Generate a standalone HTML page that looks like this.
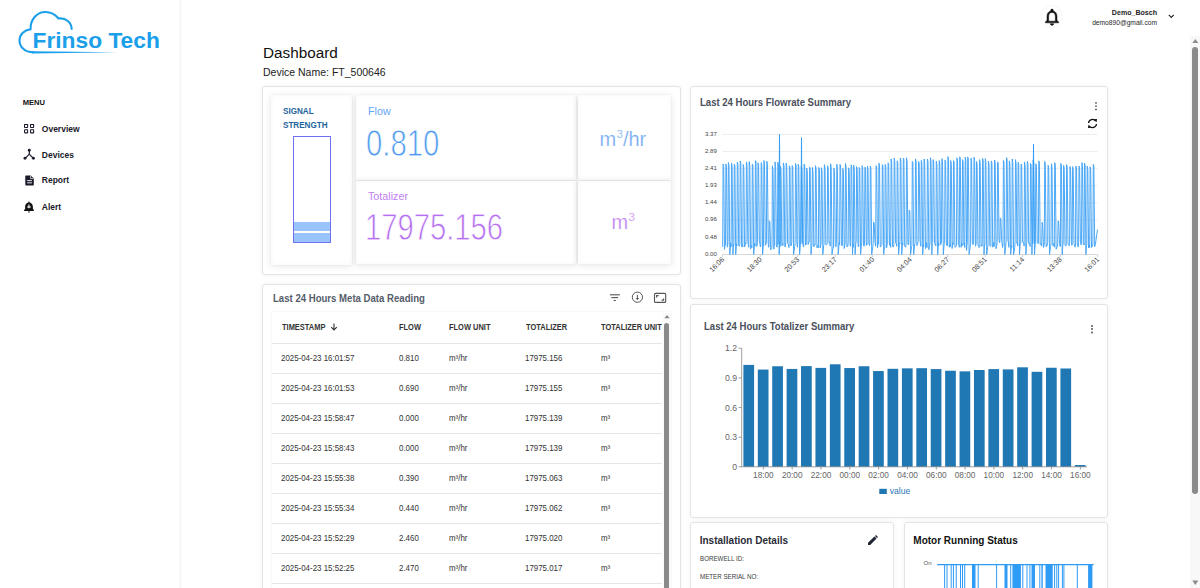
<!DOCTYPE html>
<html><head><meta charset="utf-8">
<style>
html,body{margin:0;padding:0;}
body{width:1200px;height:588px;overflow:hidden;background:#fff;position:relative;font-family:"Liberation Sans",sans-serif;color:#222;}
.abs{position:absolute;}
.t{position:absolute;white-space:nowrap;line-height:1;}
.card{position:absolute;background:#fff;border:1px solid #e2e4e8;border-radius:3px;box-sizing:border-box;box-shadow:0 0 5px rgba(0,0,0,0.05);}
.pap{position:absolute;background:#fff;box-shadow:0 1px 7px rgba(0,0,0,0.11),0 0 1px rgba(0,0,0,0.07),inset 0 0 5px rgba(0,0,0,0.03);}
.row{position:absolute;left:272px;width:390px;height:1px;background:#e6e6e6;}
.td{position:absolute;white-space:nowrap;line-height:1;font-size:8.6px;color:#333;transform:scaleX(0.92);transform-origin:0 0;}
.th{position:absolute;white-space:nowrap;line-height:1;font-size:8.3px;font-weight:700;color:#333;transform:scaleX(0.9);transform-origin:0 0;}
.menu{position:absolute;white-space:nowrap;line-height:1;font-size:8.5px;font-weight:700;color:#1a1a2a;}
</style></head>
<body>
<!-- sidebar -->
<div class="abs" style="left:179px;top:0;width:3px;height:588px;background:#f9f9fa"></div>
<svg class="abs" style="left:0;top:0" width="180" height="70" viewBox="0 0 180 70">
  <path d="M33,52.3 C25,52.3 19.5,47 19.5,40.5 C19.5,34.5 24,30 30.5,29.2 C30.5,19 37,12 45.5,12 C51,12 55.5,14.8 58.5,18.5 C66,17.5 71.5,22.5 71.7,29" fill="none" stroke="#1b9fea" stroke-width="2.1" stroke-linecap="round"/>
  <path d="M32,51.2 L118,52.2 L32,53.4 Z" fill="#1b9fea"/>
  <text x="32.5" y="48.3" font-family="Liberation Sans" font-weight="700" font-size="21.9" fill="#1b9fea" transform="translate(32.5,0) scale(1.04,1) translate(-32.5,0)">Frinso Tech</text>
</svg>
<div class="t" style="left:22.7px;top:99px;font-size:7.6px;font-weight:700;color:#111">MENU</div>
<!-- icons -->
<svg class="abs" style="left:24px;top:124px" width="11" height="11" viewBox="0 0 11 11"><g fill="none" stroke="#1a1a2a" stroke-width="1.05"><rect x="0.55" y="0.35" width="3.1" height="3.1" rx="0.4"/><rect x="6.55" y="0.35" width="3.1" height="3.1" rx="0.4"/><rect x="0.55" y="5.75" width="3.1" height="3.1" rx="0.4"/><rect x="6.55" y="5.75" width="3.1" height="3.1" rx="0.4"/></g></svg>
<div class="menu" style="left:41.8px;top:125px">Overview</div>
<svg class="abs" style="left:23px;top:148px" width="12" height="12" viewBox="0 0 12 12"><g stroke="#1a1a2a" stroke-width="1.2" fill="#1a1a2a"><line x1="6.3" y1="2.4" x2="6.3" y2="6.2"/><line x1="6.3" y1="6.2" x2="2.2" y2="10.3"/><line x1="6.3" y1="6.2" x2="10.3" y2="10.3"/></g><g fill="#1a1a2a"><circle cx="6.3" cy="2.3" r="1.45"/><circle cx="2" cy="10.3" r="1.45"/><circle cx="10.4" cy="10.3" r="1.45"/></g></svg>
<div class="menu" style="left:41.8px;top:150.6px">Devices</div>
<svg class="abs" style="left:24.5px;top:175px" width="10" height="11" viewBox="0 0 10 11"><path d="M1.3,0.4 H5.7 L8.8,3.5 V9.6 C8.8,10.2 8.4,10.6 7.8,10.6 H1.3 C0.7,10.6 0.3,10.2 0.3,9.6 V1.4 C0.3,0.8 0.7,0.4 1.3,0.4 Z" fill="#1a1a2a"/><path d="M5.6,0.9 V3.6 H8.3" fill="none" stroke="#fff" stroke-width="0.7"/><rect x="2.2" y="5.2" width="4.7" height="0.9" fill="#fff"/><rect x="2.2" y="7.4" width="4.7" height="0.9" fill="#fff"/></svg>
<div class="menu" style="left:41.8px;top:176.4px">Report</div>
<svg class="abs" style="left:24px;top:200.5px" width="11" height="12" viewBox="0 0 11 12"><path d="M4.4,0.6 H5.5 V1.6 C7.6,2 8.9,3.8 8.9,6 V8.4 L9.9,8.6 V10.1 H0.1 V8.6 L1.1,8.4 V6 C1.1,3.8 2.4,2 4.4,1.6 Z" fill="#111"/><path d="M4,10.4 H6 C6,11.1 5.6,11.6 5,11.6 C4.4,11.6 4,11.1 4,10.4Z" fill="#111"/><path d="M4.95,3.6 V7.3 M3.05,5.95 H6.85" stroke="#fff" stroke-width="1.15"/></svg>
<div class="menu" style="left:41.8px;top:202.5px">Alert</div>

<!-- header -->
<div class="abs" style="left:1041px;top:5.5px;width:21px;height:21px;border-radius:50%;box-shadow:0 0 1.5px rgba(0,0,0,0.12)"></div>
<svg class="abs" style="left:1041.9px;top:6.7px" width="20" height="20" viewBox="0 0 24 24"><path fill="#111" stroke="#111" stroke-width="0.6" d="M12 22c1.1 0 2-.9 2-2h-4c0 1.1.89 2 2 2zm6-6v-5c0-3.07-1.64-5.64-4.5-6.32V4c0-.83-.67-1.5-1.5-1.5s-1.5.67-1.5 1.5v.68C7.630 5.36 6 7.92 6 11v5l-2 2v1h16v-1l-2-2zm-2 1H8v-6c0-2.48 1.510-4.5 4-4.5s4 2.020 4 4.5v6z"/></svg>
<div class="t" style="left:1107px;top:8.6px;font-size:7.6px;font-weight:700;color:#222;text-align:right;width:50px;transform:scaleX(0.93);transform-origin:100% 0">Demo_Bosch</div>
<div class="t" style="left:1091px;top:19.8px;font-size:6.67px;color:#262626;text-align:right;width:66px">demo890@gmail.com</div>
<svg class="abs" style="left:1167.5px;top:14px" width="7" height="5" viewBox="0 0 7 5"><path d="M0.8,0.8 L3.3,3.4 L5.8,0.8" fill="none" stroke="#222" stroke-width="1.1"/></svg>

<!-- page scrollbar -->
<div class="abs" style="left:1190px;top:36px;width:10px;height:552px;background:#f8f8f8"></div>
<div class="abs" style="left:1192.3px;top:47.2px;width:6px;height:446.5px;background:#8a8a8a;border-radius:3px"></div>
<svg class="abs" style="left:1190px;top:36px" width="10" height="552" viewBox="0 0 10 552"><path d="M2.3,7 L5.3,3 L8.3,7 Z" fill="#8a8a8a"/><path d="M2.3,544.6 L5.3,549 L8.3,544.6 Z" fill="#8a8a8a"/></svg>

<!-- titles -->
<div class="t" style="left:263px;top:45.3px;font-size:15.3px;color:#111">Dashboard</div>
<div class="t" style="left:263px;top:67.3px;font-size:11.3px;color:#222;transform:scaleX(0.93);transform-origin:0 0">Device Name: FT_500646</div>

<!-- card 1 stats -->
<div class="card" style="left:262px;top:86px;width:419px;height:189px"></div>
<div class="pap" style="left:271px;top:95px;width:81px;height:170px"></div>
<div class="t" style="left:283.3px;top:104.3px;font-size:9px;font-weight:700;color:#1e64a0;line-height:14px;transform:scaleX(0.9);transform-origin:0 0">SIGNAL<br>STRENGTH</div>
<div class="abs" style="left:293px;top:135.5px;width:38px;height:107px;box-sizing:border-box;border:1px solid #7070f5"></div>
<div class="abs" style="left:294px;top:222px;width:36px;height:9px;background:#99c3fb"></div>
<div class="abs" style="left:294px;top:233px;width:36px;height:9px;background:#99c3fb"></div>

<div class="pap" style="left:356px;top:95px;width:220px;height:85px"></div>
<div class="pap" style="left:578px;top:95px;width:93px;height:85px"></div>
<div class="pap" style="left:356px;top:181px;width:220px;height:83px"></div>
<div class="pap" style="left:578px;top:181px;width:93px;height:83px"></div>
<div class="t" style="left:368px;top:106.2px;font-size:11.3px;color:#62a6f5;transform:scaleX(0.95);transform-origin:0 0">Flow</div>
<div class="t" style="left:366.2px;top:125.4px;font-size:37.5px;color:#4f9af0;transform:scaleX(0.781);transform-origin:0 0;-webkit-text-stroke:0.85px #fff">0.810</div>
<div class="t" style="left:368px;top:190.7px;font-size:11.3px;color:#c07ef2;transform:scaleX(0.95);transform-origin:0 0">Totalizer</div>
<div class="t" style="left:364.8px;top:209.2px;font-size:37.5px;color:#b56ff0;transform:scaleX(0.779);transform-origin:0 0;-webkit-text-stroke:0.85px #fff">17975.156</div>
<div class="t" style="left:599.5px;top:129px;font-size:20px;color:#74abf0;-webkit-text-stroke:0.2px #fff">m<span style="font-size:11.5px;position:relative;top:-8.3px;margin-left:0.3px">3</span>/hr</div>
<div class="t" style="left:611.5px;top:212.3px;font-size:20px;color:#c184f0;-webkit-text-stroke:0.2px #fff">m<span style="font-size:11.5px;position:relative;top:-8.3px;margin-left:0.3px">3</span></div>

<!-- meta card -->
<div class="card" style="left:262px;top:284px;width:419px;height:320px"></div>
<div class="t" style="left:272.5px;top:293.8px;font-size:10.1px;font-weight:700;color:#555c6a;transform:scaleX(0.95);transform-origin:0 0">Last 24 Hours Meta Data Reading</div>
<svg class="abs" style="left:609px;top:291px" width="60" height="13" viewBox="0 0 60 13">
 <g stroke="#555" fill="none"><line x1="0.9" y1="3.8" x2="10.9" y2="3.8" stroke-width="1.1"/><line x1="2.4" y1="6.6" x2="9" y2="6.6" stroke-width="1.1"/><line x1="4.7" y1="9.5" x2="6.8" y2="9.5" stroke-width="1.1"/>
 <circle cx="28.4" cy="6.2" r="5.1" stroke-width="1"/><path d="M28.4,3.8 V8.2" stroke-width="1"/></g><path d="M26.6,7 L28.4,8.9 L30.2,7 Z" fill="#555"/>
 <g stroke="#555" fill="none"><rect x="45.5" y="2.4" width="11.2" height="9" rx="1" stroke-width="1.1"/><path d="M47.6,6.4 V4.6 H49.6" stroke-width="1.2"/><path d="M54.6,7.4 V9.2 H52.6" stroke-width="1.2"/></g></svg>
<div class="pap" style="left:272px;top:312px;width:399px;height:300px;box-shadow:0 0 2px rgba(0,0,0,0.08)"></div>
<div class="th" style="left:281.5px;top:323.1px">TIMESTAMP</div>
<svg class="abs" style="left:330px;top:323px" width="8" height="8" viewBox="0 0 8 8"><path d="M4,0.5 V7 M1.2,4.2 L4,7 L6.8,4.2" fill="none" stroke="#333" stroke-width="1.1"/></svg>
<div class="th" style="left:399.2px;top:323.1px">FLOW</div>
<div class="th" style="left:449.2px;top:323.1px">FLOW UNIT</div>
<div class="th" style="left:526px;top:323.1px">TOTALIZER</div>
<div class="th" style="left:601.3px;top:323.1px">TOTALIZER UNIT</div>
<div class="row" style="top:343.3px"></div><div class="td" style="left:281px;top:354.3px">2025-04-23 16:01:57</div><div class="td" style="left:399px;top:354.3px">0.810</div><div class="td" style="left:449px;top:354.3px">m³/hr</div><div class="td" style="left:525px;top:354.3px">17975.156</div><div class="td" style="left:601px;top:354.3px">m³</div><div class="row" style="top:373.3px"></div><div class="td" style="left:281px;top:384.3px">2025-04-23 16:01:53</div><div class="td" style="left:399px;top:384.3px">0.690</div><div class="td" style="left:449px;top:384.3px">m³/hr</div><div class="td" style="left:525px;top:384.3px">17975.155</div><div class="td" style="left:601px;top:384.3px">m³</div><div class="row" style="top:403.3px"></div><div class="td" style="left:281px;top:414.3px">2025-04-23 15:58:47</div><div class="td" style="left:399px;top:414.3px">0.000</div><div class="td" style="left:449px;top:414.3px">m³/hr</div><div class="td" style="left:525px;top:414.3px">17975.139</div><div class="td" style="left:601px;top:414.3px">m³</div><div class="row" style="top:433.3px"></div><div class="td" style="left:281px;top:444.3px">2025-04-23 15:58:43</div><div class="td" style="left:399px;top:444.3px">0.000</div><div class="td" style="left:449px;top:444.3px">m³/hr</div><div class="td" style="left:525px;top:444.3px">17975.139</div><div class="td" style="left:601px;top:444.3px">m³</div><div class="row" style="top:463.3px"></div><div class="td" style="left:281px;top:474.3px">2025-04-23 15:55:38</div><div class="td" style="left:399px;top:474.3px">0.390</div><div class="td" style="left:449px;top:474.3px">m³/hr</div><div class="td" style="left:525px;top:474.3px">17975.063</div><div class="td" style="left:601px;top:474.3px">m³</div><div class="row" style="top:493.3px"></div><div class="td" style="left:281px;top:504.3px">2025-04-23 15:55:34</div><div class="td" style="left:399px;top:504.3px">0.440</div><div class="td" style="left:449px;top:504.3px">m³/hr</div><div class="td" style="left:525px;top:504.3px">17975.062</div><div class="td" style="left:601px;top:504.3px">m³</div><div class="row" style="top:523.3px"></div><div class="td" style="left:281px;top:534.3px">2025-04-23 15:52:29</div><div class="td" style="left:399px;top:534.3px">2.460</div><div class="td" style="left:449px;top:534.3px">m³/hr</div><div class="td" style="left:525px;top:534.3px">17975.020</div><div class="td" style="left:601px;top:534.3px">m³</div><div class="row" style="top:553.3px"></div><div class="td" style="left:281px;top:564.3px">2025-04-23 15:52:25</div><div class="td" style="left:399px;top:564.3px">2.470</div><div class="td" style="left:449px;top:564.3px">m³/hr</div><div class="td" style="left:525px;top:564.3px">17975.017</div><div class="td" style="left:601px;top:564.3px">m³</div><div class="row" style="top:583.3px"></div>
<div class="abs" style="left:663px;top:313px;width:8px;height:275px;background:#fafafa"></div>
<div class="abs" style="left:664.3px;top:323.3px;width:5px;height:265px;background:#8a8a8a;border-radius:2.5px 2.5px 0 0"></div>
<svg class="abs" style="left:663px;top:313px" width="8" height="7" viewBox="0 0 8 7"><path d="M1.3,5.3 L4,2 L6.7,5.3Z" fill="#8a8a8a"/></svg>

<!-- flowrate chart card -->
<div class="card" style="left:690px;top:86px;width:418px;height:213px"></div>
<div class="t" style="left:700px;top:98.4px;font-size:10.1px;font-weight:700;color:#4a505c;transform:scaleX(0.945);transform-origin:0 0">Last 24 Hours Flowrate Summary</div>
<svg class="abs" style="left:1094px;top:101px" width="4" height="10" viewBox="0 0 4 10"><g fill="#555"><circle cx="2" cy="1.9" r="0.9"/><circle cx="2" cy="5.1" r="0.9"/><circle cx="2" cy="8.4" r="0.9"/></g></svg>
<svg class="abs" style="left:1087px;top:118px" width="11" height="11" viewBox="0 0 11 11"><g fill="none" stroke="#111" stroke-width="1.3"><path d="M1.5,5 A4,4 0 0 1 8.8,3.2"/><path d="M9.5,6 A4,4 0 0 1 2.2,7.8"/></g><path d="M7,1.2 L10,1 L9.6,4.3Z" fill="#111"/><path d="M4,9.8 L1,10 L1.4,6.7Z" fill="#111"/></svg>
<svg class="abs" style="left:0;top:0" width="1200" height="588" viewBox="0 0 1200 588">
<line x1="722.5" y1="254.5" x2="1097.5" y2="254.5" stroke="#ececec" stroke-width="1"/><text x="716.8" y="255.7" text-anchor="end" font-size="6.1" fill="#444">0.00</text><line x1="722.5" y1="237.3" x2="1097.5" y2="237.3" stroke="#ececec" stroke-width="1"/><text x="716.8" y="238.5" text-anchor="end" font-size="6.1" fill="#444">0.48</text><line x1="722.5" y1="220.2" x2="1097.5" y2="220.2" stroke="#ececec" stroke-width="1"/><text x="716.8" y="221.4" text-anchor="end" font-size="6.1" fill="#444">0.96</text><line x1="722.5" y1="203.0" x2="1097.5" y2="203.0" stroke="#ececec" stroke-width="1"/><text x="716.8" y="204.2" text-anchor="end" font-size="6.1" fill="#444">1.44</text><line x1="722.5" y1="185.9" x2="1097.5" y2="185.9" stroke="#ececec" stroke-width="1"/><text x="716.8" y="187.1" text-anchor="end" font-size="6.1" fill="#444">1.93</text><line x1="722.5" y1="168.7" x2="1097.5" y2="168.7" stroke="#ececec" stroke-width="1"/><text x="716.8" y="169.9" text-anchor="end" font-size="6.1" fill="#444">2.41</text><line x1="722.5" y1="151.6" x2="1097.5" y2="151.6" stroke="#ececec" stroke-width="1"/><text x="716.8" y="152.8" text-anchor="end" font-size="6.1" fill="#444">2.89</text><line x1="722.5" y1="134.4" x2="1097.5" y2="134.4" stroke="#ececec" stroke-width="1"/><text x="716.8" y="135.6" text-anchor="end" font-size="6.1" fill="#444">3.37</text><line x1="722.7" y1="254.5" x2="722.7" y2="257" stroke="#ccc"/><text transform="translate(724.7,260) rotate(-45)" text-anchor="end" font-size="7.1" fill="#444">16:06</text><line x1="760.2" y1="254.5" x2="760.2" y2="257" stroke="#ccc"/><text transform="translate(762.2,260) rotate(-45)" text-anchor="end" font-size="7.1" fill="#444">18:30</text><line x1="797.7" y1="254.5" x2="797.7" y2="257" stroke="#ccc"/><text transform="translate(799.7,260) rotate(-45)" text-anchor="end" font-size="7.1" fill="#444">20:53</text><line x1="835.2" y1="254.5" x2="835.2" y2="257" stroke="#ccc"/><text transform="translate(837.2,260) rotate(-45)" text-anchor="end" font-size="7.1" fill="#444">23:17</text><line x1="872.7" y1="254.5" x2="872.7" y2="257" stroke="#ccc"/><text transform="translate(874.7,260) rotate(-45)" text-anchor="end" font-size="7.1" fill="#444">01:40</text><line x1="910.2" y1="254.5" x2="910.2" y2="257" stroke="#ccc"/><text transform="translate(912.2,260) rotate(-45)" text-anchor="end" font-size="7.1" fill="#444">04:04</text><line x1="947.7" y1="254.5" x2="947.7" y2="257" stroke="#ccc"/><text transform="translate(949.7,260) rotate(-45)" text-anchor="end" font-size="7.1" fill="#444">06:27</text><line x1="985.2" y1="254.5" x2="985.2" y2="257" stroke="#ccc"/><text transform="translate(987.2,260) rotate(-45)" text-anchor="end" font-size="7.1" fill="#444">08:51</text><line x1="1022.7" y1="254.5" x2="1022.7" y2="257" stroke="#ccc"/><text transform="translate(1024.7,260) rotate(-45)" text-anchor="end" font-size="7.1" fill="#444">11:14</text><line x1="1060.2" y1="254.5" x2="1060.2" y2="257" stroke="#ccc"/><text transform="translate(1062.2,260) rotate(-45)" text-anchor="end" font-size="7.1" fill="#444">13:38</text><line x1="1097.7" y1="254.5" x2="1097.7" y2="257" stroke="#ccc"/><text transform="translate(1099.7,260) rotate(-45)" text-anchor="end" font-size="7.1" fill="#444">16:01</text>
<line x1="722.5" y1="254.5" x2="1097.5" y2="254.5" stroke="#d8d8d8"/>
<path d="M722.5,246.7 L722.7,246.8 L723.1,164.0 L723.7,166.8 L724.5,249.3 L725.1,244.8 L725.5,244.9 L725.9,163.9 L726.5,166.4 L727.3,247.2 L727.6,246.5 L728.0,241.6 L728.4,162.5 L729.0,166.7 L729.8,254.5 L730.7,242.8 L731.1,246.8 L731.5,163.0 L732.1,166.6 L732.9,254.5 L733.5,244.4 L733.9,245.3 L734.3,164.2 L734.9,165.5 L735.7,254.5 L736.5,243.8 L736.9,245.7 L737.3,162.3 L737.9,164.4 L738.7,245.3 L739.4,246.3 L739.8,244.4 L740.2,161.0 L740.8,163.0 L741.6,246.7 L742.4,245.3 L742.8,246.8 L743.2,164.5 L743.8,167.7 L744.6,247.0 L745.6,242.7 L746.0,243.3 L746.4,161.9 L747.0,164.4 L747.8,241.7 L748.4,245.0 L748.8,247.3 L749.2,161.6 L749.8,165.9 L750.6,248.9 L751.5,245.5 L751.9,247.6 L752.3,164.1 L752.9,165.5 L753.7,254.5 L754.6,243.3 L755.0,246.1 L755.4,160.6 L756.0,161.9 L756.8,246.4 L757.2,242.7 L757.6,242.2 L758.0,162.9 L758.6,165.1 L759.4,240.6 L760.4,246.9 L760.8,246.2 L761.2,162.7 L761.8,165.6 L762.6,254.5 L763.1,247.7 L763.5,245.4 L763.9,160.5 L764.5,163.8 L765.3,245.3 L766.0,243.9 L766.4,242.0 L766.8,161.2 L767.4,164.8 L768.2,243.0 L768.5,247.1 L768.9,247.3 L769.3,220.8 L769.9,222.4 L770.7,249.9 L771.6,247.7 L772.0,247.1 L772.4,165.8 L773.0,169.7 L773.8,249.2 L774.2,246.3 L774.6,245.4 L775.0,161.9 L775.6,166.2 L776.4,246.0 L777.0,247.2 L777.4,245.5 L777.8,162.2 L778.4,163.8 L779.2,254.5 L779.6,242.3 L780.0,246.8 L780.4,166.4 L781.0,169.2 L781.8,245.6 L782.6,243.8 L783.0,245.4 L783.4,162.9 L784.0,165.7 L784.8,246.7 L785.4,246.5 L785.8,241.4 L786.2,163.0 L786.8,166.7 L787.6,243.2 L788.6,244.8 L789.0,247.5 L789.4,165.8 L790.0,167.7 L790.8,246.0 L791.4,245.2 L791.8,241.4 L792.2,165.6 L792.8,167.4 L793.6,254.5 L794.7,246.6 L795.1,243.7 L795.5,163.5 L796.1,166.1 L796.9,242.9 L797.4,247.2 L797.8,241.9 L798.2,164.2 L798.8,166.8 L799.6,254.5 L800.5,243.2 L800.9,242.6 L801.3,166.0 L801.9,168.3 L802.7,242.1 L803.3,246.8 L803.7,246.8 L804.1,164.0 L804.7,165.5 L805.5,245.1 L805.9,244.0 L806.3,244.2 L806.7,168.0 L807.3,172.2 L808.1,244.6 L808.8,242.4 L809.2,242.1 L809.6,167.1 L810.2,168.9 L811.0,254.5 L811.6,246.4 L812.0,246.1 L812.4,167.5 L813.0,171.5 L813.8,246.8 L814.7,244.4 L815.1,245.0 L815.5,165.7 L816.1,168.5 L816.9,247.8 L818.0,245.2 L818.4,247.7 L818.8,167.4 L819.4,170.0 L820.2,248.0 L820.6,245.9 L821.0,244.2 L821.4,167.8 L822.0,170.7 L822.8,254.5 L823.6,246.1 L824.0,244.5 L824.4,164.6 L825.0,168.6 L825.8,244.5 L826.8,244.8 L827.2,243.3 L827.6,165.8 L828.2,168.4 L829.0,242.9 L829.8,242.7 L830.2,246.1 L830.6,163.8 L831.2,167.6 L832.0,254.5 L833.1,247.0 L833.5,247.3 L833.9,168.2 L834.5,171.4 L835.3,246.0 L836.0,246.8 L836.4,243.5 L836.8,164.2 L837.4,168.4 L838.2,254.5 L839.2,242.3 L839.6,244.6 L840.0,164.4 L840.6,166.0 L841.4,245.1 L842.0,245.8 L842.4,245.7 L842.8,168.4 L843.4,171.2 L844.2,248.5 L844.7,245.8 L845.1,244.4 L845.5,163.5 L846.1,167.1 L846.9,246.8 L847.8,246.2 L848.2,242.7 L848.6,167.8 L849.2,170.2 L850.0,241.8 L850.3,246.3 L850.7,241.8 L851.1,164.9 L851.7,166.2 L852.5,254.5 L852.9,243.8 L853.3,247.3 L853.7,165.2 L854.3,168.8 L855.1,254.5 L855.8,242.8 L856.2,242.2 L856.6,166.6 L857.2,169.4 L858.0,243.8 L858.4,247.0 L858.8,246.2 L859.2,167.4 L859.8,168.7 L860.6,254.5 L861.3,245.9 L861.7,242.9 L862.1,165.7 L862.7,167.3 L863.5,245.6 L864.1,246.3 L864.5,243.0 L864.9,167.2 L865.5,169.8 L866.3,245.4 L866.6,243.1 L867.0,244.6 L867.4,166.1 L868.0,168.8 L868.8,242.9 L869.5,245.8 L869.9,243.2 L870.3,166.0 L870.9,168.2 L871.7,254.5 L872.8,247.0 L873.2,243.0 L873.6,221.9 L874.2,223.3 L875.0,241.8 L875.3,243.9 L875.7,246.2 L876.1,165.7 L876.7,167.3 L877.5,247.8 L878.1,242.2 L878.5,244.2 L878.9,163.1 L879.5,165.2 L880.3,247.1 L881.5,245.6 L881.9,244.5 L882.3,164.7 L882.9,165.8 L883.7,254.5 L884.4,247.2 L884.8,247.5 L885.2,164.4 L885.8,166.2 L886.6,247.9 L887.3,243.4 L887.7,243.1 L888.1,162.8 L888.7,164.9 L889.5,245.3 L890.3,243.6 L890.7,247.4 L891.1,158.9 L891.7,162.0 L892.5,246.5 L893.4,246.9 L893.8,244.5 L894.2,158.1 L894.8,161.8 L895.6,243.2 L896.4,243.8 L896.8,246.3 L897.2,160.8 L897.8,163.0 L898.6,254.5 L899.5,243.0 L899.9,243.7 L900.3,158.1 L900.9,160.7 L901.7,254.5 L902.5,243.2 L902.9,244.5 L903.3,158.2 L903.9,159.5 L904.7,246.2 L905.7,247.3 L906.1,243.1 L906.5,157.8 L907.1,162.0 L907.9,244.1 L908.4,245.0 L908.8,242.8 L909.2,210.0 L909.8,211.3 L910.6,254.5 L911.5,246.3 L911.9,245.8 L912.3,161.4 L912.9,162.7 L913.7,254.5 L914.7,243.9 L915.1,243.4 L915.5,158.9 L916.1,161.5 L916.9,245.7 L917.8,242.6 L918.2,241.5 L918.6,161.4 L919.2,163.9 L920.0,239.8 L920.5,245.2 L920.9,246.4 L921.3,160.4 L921.9,163.4 L922.7,254.5 L923.3,244.7 L923.7,246.9 L924.1,158.9 L924.7,162.9 L925.5,248.7 L926.6,242.6 L927.0,247.6 L927.4,159.0 L928.0,161.5 L928.8,249.8 L929.6,245.8 L930.0,242.3 L930.4,157.7 L931.0,161.5 L931.8,254.5 L932.3,242.4 L932.7,241.9 L933.1,159.6 L933.7,162.0 L934.5,242.1 L935.5,245.7 L935.9,246.0 L936.3,161.0 L936.9,164.7 L937.7,254.5 L938.4,242.4 L938.8,246.0 L939.2,160.5 L939.8,162.8 L940.6,244.8 L941.1,243.1 L941.5,241.9 L941.9,158.7 L942.5,162.1 L943.3,254.5 L944.2,243.6 L944.6,242.9 L945.0,160.1 L945.6,161.3 L946.4,245.2 L947.1,245.0 L947.5,245.8 L947.9,156.6 L948.5,158.5 L949.3,247.3 L949.9,244.6 L950.3,246.7 L950.7,160.5 L951.3,164.5 L952.1,248.5 L952.7,242.6 L953.1,244.8 L953.5,160.6 L954.1,162.0 L954.9,247.3 L956.1,246.4 L956.5,244.1 L956.9,157.9 L957.5,160.2 L958.3,244.5 L958.9,245.6 L959.3,247.3 L959.7,156.8 L960.3,158.3 L961.1,247.3 L961.7,242.8 L962.1,246.0 L962.5,159.7 L963.1,162.2 L963.9,244.9 L964.4,242.8 L964.8,247.5 L965.2,157.2 L965.8,159.8 L966.6,250.4 L966.9,245.5 L967.3,242.4 L967.7,156.9 L968.3,158.7 L969.1,254.5 L970.2,246.8 L970.6,243.4 L971.0,158.2 L971.6,161.3 L972.4,244.1 L973.2,244.6 L973.6,242.7 L974.0,157.2 L974.6,160.4 L975.4,245.0 L975.7,246.3 L976.1,243.2 L976.5,161.5 L977.1,164.2 L977.9,244.3 L978.8,246.5 L979.2,247.7 L979.6,159.6 L980.2,163.7 L981.0,246.4 L981.8,245.0 L982.2,246.1 L982.6,158.4 L983.2,160.5 L984.0,254.5 L984.5,244.9 L984.9,245.0 L985.3,158.6 L985.9,162.7 L986.7,254.5 L987.6,247.5 L988.0,245.0 L988.4,161.0 L989.0,164.6 L989.8,245.5 L990.5,246.6 L990.9,245.7 L991.3,160.9 L991.9,162.7 L992.7,247.2 L993.8,242.3 L994.2,246.5 L994.6,160.0 L995.2,163.2 L996.0,248.7 L996.8,245.5 L997.2,241.5 L997.6,161.9 L998.2,163.1 L999.0,240.2 L999.5,242.7 L999.9,241.3 L1000.3,217.8 L1000.9,219.4 L1001.7,240.7 L1002.6,247.5 L1003.0,245.3 L1003.4,160.5 L1004.0,162.1 L1004.8,254.5 L1005.7,246.1 L1006.1,241.6 L1006.5,157.6 L1007.1,159.4 L1007.9,240.6 L1008.5,243.0 L1008.9,247.4 L1009.3,160.9 L1009.9,164.9 L1010.7,254.5 L1011.4,245.7 L1011.8,247.5 L1012.2,159.0 L1012.8,162.6 L1013.6,254.5 L1014.7,247.5 L1015.1,241.8 L1015.5,159.7 L1016.1,163.7 L1016.9,243.4 L1017.3,242.3 L1017.7,246.0 L1018.1,162.2 L1018.7,164.1 L1019.5,254.5 L1020.3,243.4 L1020.7,243.7 L1021.1,164.0 L1021.7,165.8 L1022.5,242.1 L1023.7,242.3 L1024.1,246.1 L1024.5,161.9 L1025.1,166.0 L1025.9,254.5 L1026.5,243.2 L1026.9,242.5 L1027.3,161.5 L1027.9,163.6 L1028.7,243.6 L1029.7,243.3 L1030.1,246.5 L1030.5,163.5 L1031.1,164.7 L1031.9,254.5 L1032.3,244.6 L1032.7,241.4 L1033.1,159.9 L1033.7,161.8 L1034.5,254.5 L1035.0,247.2 L1035.4,243.2 L1035.8,163.8 L1036.4,166.2 L1037.2,242.9 L1038.0,243.5 L1038.4,243.5 L1038.8,160.9 L1039.4,162.9 L1040.2,244.6 L1041.3,243.5 L1041.7,246.1 L1042.1,222.2 L1042.7,226.1 L1043.5,247.5 L1043.9,245.5 L1044.3,244.5 L1044.7,161.3 L1045.3,164.5 L1046.1,246.9 L1047.3,245.0 L1047.7,242.3 L1048.1,165.3 L1048.7,167.3 L1049.5,254.5 L1050.6,246.6 L1051.0,244.0 L1051.4,163.8 L1052.0,167.7 L1052.8,245.6 L1053.9,243.3 L1054.3,247.1 L1054.7,162.7 L1055.3,164.5 L1056.1,249.2 L1057.3,246.6 L1057.7,243.9 L1058.1,220.9 L1058.7,222.0 L1059.5,243.6 L1060.0,246.7 L1060.4,246.4 L1060.8,163.4 L1061.4,164.7 L1062.2,254.5 L1062.8,245.5 L1063.2,243.6 L1063.6,165.4 L1064.2,168.7 L1065.0,245.2 L1065.8,246.0 L1066.2,245.7 L1066.6,164.6 L1067.2,167.0 L1068.0,244.0 L1069.2,245.7 L1069.6,243.1 L1070.0,166.5 L1070.6,170.5 L1071.4,242.1 L1071.8,245.4 L1072.2,244.8 L1072.6,166.6 L1073.2,169.5 L1074.0,243.4 L1075.1,247.2 L1075.5,245.3 L1075.9,166.1 L1076.5,168.1 L1077.3,243.9 L1078.2,247.1 L1078.6,242.6 L1079.0,166.0 L1079.6,167.5 L1080.4,240.9 L1081.1,245.0 L1081.5,241.8 L1081.9,162.6 L1082.5,165.7 L1083.3,243.9 L1083.7,243.2 L1084.1,245.1 L1084.5,163.1 L1085.1,164.8 L1085.9,254.5 L1086.4,245.4 L1086.8,245.3 L1087.2,166.1 L1087.8,169.5 L1088.6,247.9 L1089.3,244.5 L1089.7,247.5 L1090.1,166.9 L1090.7,169.9 L1091.5,247.4 L1092.5,246.0 L1092.9,244.0 L1093.3,164.4 L1093.9,166.9 L1094.7,246.7 L1095.4,244.2 L1097.5,229.6" fill="none" stroke="#42a3f5" stroke-width="0.95" stroke-linejoin="miter"/>
<g fill="none" stroke="#2e9bf5" stroke-width="0.9"><path d="M778.7,243.8 L779.5,134.4 L780.3,243.8" /><path d="M800.7,243.8 L801.5,137.6 L802.3,243.8" /><path d="M1032.7,243.8 L1033.5,144.0 L1034.3,243.8" /></g>
</svg>

<!-- totalizer chart card -->
<div class="card" style="left:690px;top:304px;width:418px;height:214px"></div>
<div class="t" style="left:704.3px;top:321.9px;font-size:10.1px;font-weight:700;color:#4a505c;transform:scaleX(0.945);transform-origin:0 0">Last 24 Hours Totalizer Summary</div>
<svg class="abs" style="left:1089.5px;top:324px" width="4" height="10" viewBox="0 0 4 10"><g fill="#555"><circle cx="2" cy="1.9" r="1"/><circle cx="2" cy="5.1" r="1"/><circle cx="2" cy="8.4" r="1"/></g></svg>
<svg class="abs" style="left:0;top:0" width="1200" height="588" viewBox="0 0 1200 588"><rect x="743.40" y="364.90" width="10.7" height="101.90" fill="#1f77b4"/><rect x="757.81" y="369.55" width="10.7" height="97.25" fill="#1f77b4"/><rect x="772.22" y="366.25" width="10.7" height="100.55" fill="#1f77b4"/><rect x="786.63" y="368.95" width="10.7" height="97.85" fill="#1f77b4"/><rect x="801.04" y="366.10" width="10.7" height="100.70" fill="#1f77b4"/><rect x="815.45" y="367.90" width="10.7" height="98.90" fill="#1f77b4"/><rect x="829.86" y="364.30" width="10.7" height="102.50" fill="#1f77b4"/><rect x="844.27" y="368.05" width="10.7" height="98.75" fill="#1f77b4"/><rect x="858.68" y="366.25" width="10.7" height="100.55" fill="#1f77b4"/><rect x="873.09" y="371.05" width="10.7" height="95.75" fill="#1f77b4"/><rect x="887.50" y="368.80" width="10.7" height="98.00" fill="#1f77b4"/><rect x="901.91" y="368.35" width="10.7" height="98.45" fill="#1f77b4"/><rect x="916.32" y="368.20" width="10.7" height="98.60" fill="#1f77b4"/><rect x="930.73" y="369.10" width="10.7" height="97.70" fill="#1f77b4"/><rect x="945.14" y="370.75" width="10.7" height="96.05" fill="#1f77b4"/><rect x="959.55" y="371.35" width="10.7" height="95.45" fill="#1f77b4"/><rect x="973.96" y="370.00" width="10.7" height="96.80" fill="#1f77b4"/><rect x="988.37" y="369.10" width="10.7" height="97.70" fill="#1f77b4"/><rect x="1002.78" y="369.40" width="10.7" height="97.40" fill="#1f77b4"/><rect x="1017.19" y="367.30" width="10.7" height="99.50" fill="#1f77b4"/><rect x="1031.60" y="371.80" width="10.7" height="95.00" fill="#1f77b4"/><rect x="1046.01" y="367.75" width="10.7" height="99.05" fill="#1f77b4"/><rect x="1060.42" y="368.50" width="10.7" height="98.30" fill="#1f77b4"/><rect x="1074.83" y="465.00" width="10.7" height="1.80" fill="#1f77b4"/><line x1="741.7" y1="348" x2="741.7" y2="467" stroke="#888" stroke-width="0.8"/><line x1="741.7" y1="466.8" x2="1087" y2="466.8" stroke="#888" stroke-width="0.8"/><line x1="738.5" y1="466.8" x2="741.7" y2="466.8" stroke="#888" stroke-width="0.8"/><text x="737" y="469.9" text-anchor="end" font-size="8.7" fill="#666">0</text><line x1="738.5" y1="437.2" x2="741.7" y2="437.2" stroke="#888" stroke-width="0.8"/><text x="737" y="440.3" text-anchor="end" font-size="8.7" fill="#666">0.3</text><line x1="738.5" y1="407.5" x2="741.7" y2="407.5" stroke="#888" stroke-width="0.8"/><text x="737" y="410.6" text-anchor="end" font-size="8.7" fill="#666">0.6</text><line x1="738.5" y1="377.9" x2="741.7" y2="377.9" stroke="#888" stroke-width="0.8"/><text x="737" y="381.0" text-anchor="end" font-size="8.7" fill="#666">0.9</text><line x1="738.5" y1="348.2" x2="741.7" y2="348.2" stroke="#888" stroke-width="0.8"/><text x="737" y="351.3" text-anchor="end" font-size="8.7" fill="#666">1.2</text><line x1="763.4" y1="466.8" x2="763.4" y2="469.5" stroke="#888" stroke-width="0.8"/><text x="763.4" y="478.2" text-anchor="middle" font-size="8.6" fill="#666" textLength="20.6" lengthAdjust="spacingAndGlyphs">18:00</text><line x1="792.2" y1="466.8" x2="792.2" y2="469.5" stroke="#888" stroke-width="0.8"/><text x="792.2" y="478.2" text-anchor="middle" font-size="8.6" fill="#666" textLength="20.6" lengthAdjust="spacingAndGlyphs">20:00</text><line x1="821.0" y1="466.8" x2="821.0" y2="469.5" stroke="#888" stroke-width="0.8"/><text x="821.0" y="478.2" text-anchor="middle" font-size="8.6" fill="#666" textLength="20.6" lengthAdjust="spacingAndGlyphs">22:00</text><line x1="849.8" y1="466.8" x2="849.8" y2="469.5" stroke="#888" stroke-width="0.8"/><text x="849.8" y="478.2" text-anchor="middle" font-size="8.6" fill="#666" textLength="20.6" lengthAdjust="spacingAndGlyphs">00:00</text><line x1="878.6" y1="466.8" x2="878.6" y2="469.5" stroke="#888" stroke-width="0.8"/><text x="878.6" y="478.2" text-anchor="middle" font-size="8.6" fill="#666" textLength="20.6" lengthAdjust="spacingAndGlyphs">02:00</text><line x1="907.5" y1="466.8" x2="907.5" y2="469.5" stroke="#888" stroke-width="0.8"/><text x="907.5" y="478.2" text-anchor="middle" font-size="8.6" fill="#666" textLength="20.6" lengthAdjust="spacingAndGlyphs">04:00</text><line x1="936.3" y1="466.8" x2="936.3" y2="469.5" stroke="#888" stroke-width="0.8"/><text x="936.3" y="478.2" text-anchor="middle" font-size="8.6" fill="#666" textLength="20.6" lengthAdjust="spacingAndGlyphs">06:00</text><line x1="965.1" y1="466.8" x2="965.1" y2="469.5" stroke="#888" stroke-width="0.8"/><text x="965.1" y="478.2" text-anchor="middle" font-size="8.6" fill="#666" textLength="20.6" lengthAdjust="spacingAndGlyphs">08:00</text><line x1="993.9" y1="466.8" x2="993.9" y2="469.5" stroke="#888" stroke-width="0.8"/><text x="993.9" y="478.2" text-anchor="middle" font-size="8.6" fill="#666" textLength="20.6" lengthAdjust="spacingAndGlyphs">10:00</text><line x1="1022.7" y1="466.8" x2="1022.7" y2="469.5" stroke="#888" stroke-width="0.8"/><text x="1022.7" y="478.2" text-anchor="middle" font-size="8.6" fill="#666" textLength="20.6" lengthAdjust="spacingAndGlyphs">12:00</text><line x1="1051.5" y1="466.8" x2="1051.5" y2="469.5" stroke="#888" stroke-width="0.8"/><text x="1051.5" y="478.2" text-anchor="middle" font-size="8.6" fill="#666" textLength="20.6" lengthAdjust="spacingAndGlyphs">14:00</text><line x1="1080.4" y1="466.8" x2="1080.4" y2="469.5" stroke="#888" stroke-width="0.8"/><text x="1080.4" y="478.2" text-anchor="middle" font-size="8.6" fill="#666" textLength="20.6" lengthAdjust="spacingAndGlyphs">16:00</text><rect x="879.3" y="488.8" width="7.5" height="5.2" fill="#1f77b4"/><text x="889.8" y="494" font-size="8.5" fill="#1f77b4">value</text></svg>

<!-- installation -->
<div class="card" style="left:690px;top:522px;width:204px;height:80px"></div>
<div class="t" style="left:699.7px;top:535.8px;font-size:10px;font-weight:700;color:#2a2c38">Installation Details</div>
<svg class="abs" style="left:867px;top:534px" width="12" height="12" viewBox="0 0 12 12"><path d="M1,8.8 V11 H3.2 L9.6,4.6 L7.4,2.4 Z M10.6,3.6 C10.9,3.3 10.9,2.9 10.6,2.6 L9.4,1.4 C9.1,1.1 8.7,1.1 8.4,1.4 L7.9,1.9 L10.1,4.1 Z" fill="#222634"/></svg>
<div class="t" style="left:699.7px;top:554.9px;font-size:7.4px;color:#3a3a3a;transform:scaleX(0.84);transform-origin:0 0">BOREWELL ID:</div>
<div class="t" style="left:699.7px;top:572.6px;font-size:7.4px;color:#3a3a3a;transform:scaleX(0.84);transform-origin:0 0">METER SERIAL NO:</div>

<!-- motor -->
<div class="card" style="left:903.5px;top:522px;width:204.5px;height:80px"></div>
<div class="t" style="left:913.3px;top:536px;font-size:10px;font-weight:700;color:#111">Motor Running Status</div>
<svg class="abs" style="left:0;top:0" width="1200" height="588" viewBox="0 0 1200 588"><line x1="937.1" y1="564.6" x2="1093.6" y2="564.6" stroke="#2e9bf5" stroke-width="1.3"/><rect x="944.1" y="564.6" width="1.0" height="30" fill="#2e9bf5"/><rect x="946.5" y="564.6" width="1.0" height="30" fill="#2e9bf5"/><rect x="950.7" y="564.6" width="1.0" height="30" fill="#2e9bf5"/><rect x="952.9" y="564.6" width="1.0" height="30" fill="#2e9bf5"/><rect x="955.7" y="564.6" width="1.0" height="30" fill="#2e9bf5"/><rect x="960.0" y="564.6" width="1.0" height="30" fill="#2e9bf5"/><rect x="962.0" y="564.6" width="1.0" height="30" fill="#2e9bf5"/><rect x="964.2" y="564.6" width="1.0" height="30" fill="#2e9bf5"/><rect x="972.0" y="564.6" width="3.5" height="30" fill="#2e9bf5"/><rect x="977.7" y="564.6" width="1.0" height="30" fill="#2e9bf5"/><rect x="996.1" y="564.6" width="1.0" height="30" fill="#2e9bf5"/><rect x="1004.5" y="564.6" width="3.0" height="30" fill="#2e9bf5"/><rect x="1010.2" y="564.6" width="1.0" height="30" fill="#2e9bf5"/><rect x="1012.4" y="564.6" width="8.5" height="30" fill="#2e9bf5"/><rect x="1022.3" y="564.6" width="1.0" height="30" fill="#2e9bf5"/><rect x="1026.5" y="564.6" width="1.0" height="30" fill="#2e9bf5"/><rect x="1029.4" y="564.6" width="1.0" height="30" fill="#2e9bf5"/><rect x="1031.5" y="564.6" width="3.5" height="30" fill="#2e9bf5"/><rect x="1039.3" y="564.6" width="1.0" height="30" fill="#2e9bf5"/><rect x="1041.4" y="564.6" width="1.4" height="30" fill="#2e9bf5"/><rect x="1045.5" y="564.6" width="7.2" height="30" fill="#2e9bf5"/><rect x="1054.1" y="564.6" width="1.0" height="30" fill="#2e9bf5"/><rect x="1056.3" y="564.6" width="1.0" height="30" fill="#2e9bf5"/><rect x="1058.1" y="564.6" width="1.0" height="30" fill="#2e9bf5"/><rect x="1061.9" y="564.6" width="1.0" height="30" fill="#2e9bf5"/><rect x="1063.4" y="564.6" width="1.0" height="30" fill="#2e9bf5"/><rect x="1076.8" y="564.6" width="1.0" height="30" fill="#2e9bf5"/><rect x="1088.1" y="564.6" width="4.3" height="30" fill="#2e9bf5"/><text x="931.5" y="565.4" text-anchor="end" font-size="6" fill="#555">On</text></svg>
</body></html>
